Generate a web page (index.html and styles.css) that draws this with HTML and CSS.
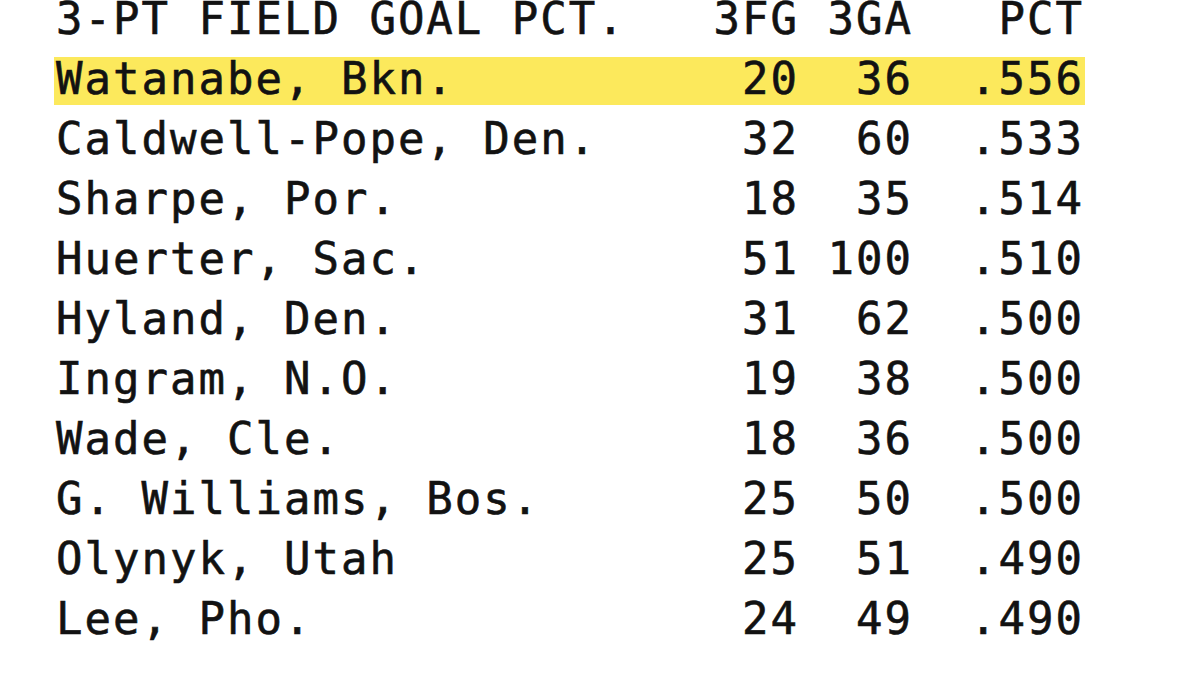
FILE: index.html
```html
<!DOCTYPE html>
<html lang="en">
<head>
<meta charset="utf-8">
<title>3-PT Field Goal Pct.</title>
<link rel="stylesheet" href="styles.css">
</head>
<body>
<div class="board">
  <div class="row head"><span class="name">3-PT FIELD GOAL PCT.</span><span class="num">3FG</span><span class="num">3GA</span><span class="num">PCT</span></div>
  <div class="row hl"><span class="name">Watanabe, Bkn.</span><span class="num">20</span><span class="num">36</span><span class="num">.556</span></div>
  <div class="row"><span class="name">Caldwell-Pope, Den.</span><span class="num">32</span><span class="num">60</span><span class="num">.533</span></div>
  <div class="row"><span class="name">Sharpe, Por.</span><span class="num">18</span><span class="num">35</span><span class="num">.514</span></div>
  <div class="row"><span class="name">Huerter, Sac.</span><span class="num">51</span><span class="num">100</span><span class="num">.510</span></div>
  <div class="row"><span class="name">Hyland, Den.</span><span class="num">31</span><span class="num">62</span><span class="num">.500</span></div>
  <div class="row"><span class="name">Ingram, N.O.</span><span class="num">19</span><span class="num">38</span><span class="num">.500</span></div>
  <div class="row"><span class="name">Wade, Cle.</span><span class="num">18</span><span class="num">36</span><span class="num">.500</span></div>
  <div class="row"><span class="name">G. Williams, Bos.</span><span class="num">25</span><span class="num">50</span><span class="num">.500</span></div>
  <div class="row"><span class="name">Olynyk, Utah</span><span class="num">25</span><span class="num">51</span><span class="num">.490</span></div>
  <div class="row"><span class="name">Lee, Pho.</span><span class="num">24</span><span class="num">49</span><span class="num">.490</span></div>
</div>
</body>
</html>
```
FILE: styles.css
```css
html, body {
  margin: 0;
  padding: 0;
  background: #ffffff;
}

body {
  width: 1200px;
  height: 675px;
  overflow: hidden;
}

.board {
  display: flex;
  flex-direction: column;
  gap: 12px;
  margin-top: -3px;
  padding-left: 54px;
  font-family: "DejaVu Sans Mono", "Liberation Mono", monospace;
  font-size: 44px;
  letter-spacing: 2px;
  color: #121212;
  -webkit-text-stroke: 0.6px #121212;
}

.row {
  display: grid;
  grid-template-columns: 627px 114px 114px 171px;
  box-sizing: border-box;
  width: 1031px;
  height: 48px;
  padding-left: 2px;
  line-height: 44px;
  white-space: pre;
}

.row.hl {
  background: #fce95c;
}

.num {
  text-align: right;
  margin-right: -2px;
}
```
